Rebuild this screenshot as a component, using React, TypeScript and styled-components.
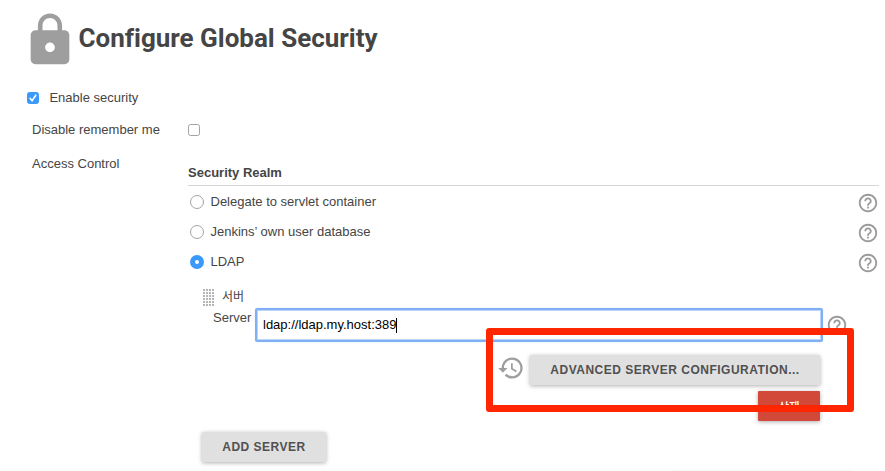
import React from "react";
import styled, { createGlobalStyle } from "styled-components";

const GlobalStyle = createGlobalStyle`
  * { box-sizing: border-box; }
  body {
    margin: 0;
    background: #fff;
    color: #454545;
    font: 13px/20px "Liberation Sans", "Noto Sans CJK KR", sans-serif;
  }
`;

const Page = styled.main`
  position: relative;
  width: 885px;
  height: 471px;
  overflow: hidden;
`;

const Header = styled.header`
  display: flex;
  height: 88px;
  padding: 11px 0 0 21px;
`;

const Title = styled.h1`
  margin: 9px 0 0 -0.5px;
  font: bold 26px/36px Roboto, sans-serif;
  letter-spacing: -0.01px;
  white-space: nowrap;
`;

const Enable = styled.label`
  display: flex;
  align-items: center;
  height: 20px;
  padding-left: 27px;
  gap: 10.4px;
`;

const Settings = styled.section`
  display: grid;
  grid-template-columns: 156px 691px;
  padding: 12px 0 0 32px;
  row-gap: 14px;
`;

const Check = styled.span<{ $on?: boolean }>`
  display: flex;
  width: 12px;
  height: 12px;
  border: 1px solid ${(p) => (p.$on ? "#3b99fc" : "#a3a3a3")};
  border-radius: 2.5px;
  background: ${(p) => (p.$on ? "#3b99fc" : "#fff")};
`;

const CheckCell = styled.div`
  display: flex;
  align-items: center;
`;

const RealmTitle = styled.h2`
  height: 32px;
  margin: 0;
  padding-top: 9px;
  border-bottom: 1px solid #d6d6d6;
  font-size: 13px;
  line-height: 20px;
`;

const Option = styled.div`
  display: flex;
  align-items: center;
  height: 30px;
  padding: 2px 0 0 2px;

  > svg { margin: 2px 0 0 auto; }
`;

const RadioLabel = styled.label`
  display: flex;
  align-items: center;
  gap: 6.5px;
`;

const Radio = styled.span<{ $on?: boolean }>`
  width: 14px;
  height: 14px;
  border-radius: 50%;
  border: ${(p) => (p.$on ? "5px solid #3b99fc" : "1px solid #a3a3a3")};
`;

const ServerHeading = styled.div`
  display: flex;
  height: 20px;
  margin-top: 10px;
  padding-left: 15px;
  gap: 7px;
  font-size: 12px;
  line-height: 22px;
`;

const Handle = styled.span`
  width: 12px;
  height: 17px;
  margin-top: 3px;
  background: radial-gradient(circle at 1px 1px, #b4b4b4 0.7px, transparent 1.1px) 0 0 / 3px 3px;
`;

const ServerRow = styled.div`
  display: flex;
  height: 34px;
  padding-left: 25px;
  margin-top: 2px;

  > svg { margin: 6px 0 0 3px; }
`;

const ServerLabel = styled.label`
  width: 42px;
`;

const Field = styled.div`
  display: flex;
  align-items: center;
  width: 568px;
  height: 34px;
  padding-left: 6px;
  border: 2px solid #7fb0f5;
  border-radius: 2px;
  box-shadow: inset 0 0 0 1px #b9d5fb, 0 0 1px #a9cbfa;
  color: #000;
`;

const Caret = styled.span`
  width: 1px;
  height: 15px;
  background: #000;
`;

const AdvancedRow = styled.div`
  display: flex;
  justify-content: flex-end;
  padding: 13px 59px 0 0;

  > svg { margin: -1.5px 5px 0 0; }
`;

const Button = styled.button<{ $width: number }>`
  width: ${(p) => p.$width}px;
  height: 30px;
  padding: 0;
  border: 0;
  border-radius: 1px;
  background: #e0e0e0;
  color: #505050;
  box-shadow: 0 1px 4px rgba(0, 0, 0, 0.32);
  font: bold 12px/30px "Liberation Sans", "Noto Sans CJK KR", sans-serif;
  letter-spacing: 0.5px;
  white-space: nowrap;
`;

const DangerButton = styled(Button)`
  padding-top: 2px;
  background: #d24939;
  color: #fff;
  font-size: 11.5px;
  font-weight: 500;
  letter-spacing: 0;
  line-height: 28px;
`;

const DeleteRow = styled.div`
  display: flex;
  justify-content: flex-end;
  padding: 6px 59px 0 0;
`;

const AddRow = styled.div`
  padding: 11px 0 0 14px;
`;

const Highlight = styled.div`
  position: absolute;
  left: 486px;
  top: 328px;
  width: 368px;
  height: 84px;
  border: 7px solid #ff2600;
  border-radius: 3px;
`;

const FooterEdge = styled.div`
  position: absolute;
  left: 672px;
  top: 470px;
  width: 181px;
  height: 1px;
  background: #f8f8f8;
`;

const LockIcon = () => (
  <svg width="58" height="58" viewBox="0 0 24 24" fill="#9e9e9e">
    <path d="M18 8h-1V6c0-2.76-2.24-5-5-5S7 3.24 7 6v2H6c-1.1 0-2 .9-2 2v10c0 1.1.9 2 2 2h12c1.1 0 2-.9 2-2V10c0-1.1-.9-2-2-2zm-6 9c-1.1 0-2-.9-2-2s.9-2 2-2 2 .9 2 2-.9 2-2 2zm3.1-9H8.9V6c0-1.71 1.39-3.1 3.1-3.1 1.71 0 3.1 1.39 3.1 3.1v2z" />
  </svg>
);

const HelpIcon = () => (
  <svg width="22" height="22" viewBox="0 0 24 24" fill="#9a9a9a">
    <path d="M11 18h2v-2h-2v2zm1-16C6.48 2 2 6.48 2 12s4.48 10 10 10 10-4.48 10-10S17.52 2 12 2zm0 18c-4.41 0-8-3.59-8-8s3.59-8 8-8 8 3.59 8 8-3.59 8-8 8zm0-14c-2.21 0-4 1.79-4 4h2c0-1.1.9-2 2-2s2 .9 2 2c0 2-3 1.75-3 5h2c0-2.25 3-2.5 3-5 0-2.21-1.79-4-4-4z" />
  </svg>
);

const HistoryIcon = () => (
  <svg width="28" height="28" viewBox="0 0 24 24" fill="#9e9e9e">
    <path d="M13 3c-4.97 0-9 4.03-9 9H1l3.89 3.89.07.14L9 12H6c0-3.87 3.13-7 7-7s7 3.13 7 7-3.13 7-7 7c-1.93 0-3.68-.79-4.94-2.06l-1.42 1.42C8.27 19.99 10.51 21 13 21c4.97 0 9-4.03 9-9s-4.03-9-9-9zm-1 5v5l4.28 2.54.72-1.21-3.5-2.08V8H12z" />
  </svg>
);

const CheckMark = () => (
  <svg width="10" height="10" viewBox="0 0 10 10" fill="none" stroke="#fff" strokeWidth="1.6" strokeLinecap="round">
    <path d="M2.2 5.4 4.1 7.6 7.8 2.2" />
  </svg>
);

const realms = [
  { label: "Delegate to servlet container" },
  { label: "Jenkins’ own user database" },
  { label: "LDAP", selected: true },
];

export default function App() {
  return (
    <Page>
      <GlobalStyle />
      <Header>
        <LockIcon />
        <Title>Configure Global Security</Title>
      </Header>
      <Enable>
        <Check $on>
          <CheckMark />
        </Check>
        Enable security
      </Enable>
      <Settings>
        <span>Disable remember me</span>
        <CheckCell>
          <Check />
        </CheckCell>
        <span>Access Control</span>
        <div>
          <RealmTitle>Security Realm</RealmTitle>
          {realms.map((realm) => (
            <Option key={realm.label}>
              <RadioLabel>
                <Radio $on={realm.selected} />
                {realm.label}
              </RadioLabel>
              <HelpIcon />
            </Option>
          ))}
          <ServerHeading>
            <Handle />
            서버
          </ServerHeading>
          <ServerRow>
            <ServerLabel>Server</ServerLabel>
            <Field>
              ldap://ldap.my.host:389
              <Caret />
            </Field>
            <HelpIcon />
          </ServerRow>
          <AdvancedRow>
            <HistoryIcon />
            <Button $width={290}>ADVANCED SERVER CONFIGURATION...</Button>
          </AdvancedRow>
          <DeleteRow>
            <DangerButton $width={62}>삭제</DangerButton>
          </DeleteRow>
          <AddRow>
            <Button $width={124}>ADD SERVER</Button>
          </AddRow>
        </div>
      </Settings>
      <Highlight />
      <FooterEdge />
    </Page>
  );
}
